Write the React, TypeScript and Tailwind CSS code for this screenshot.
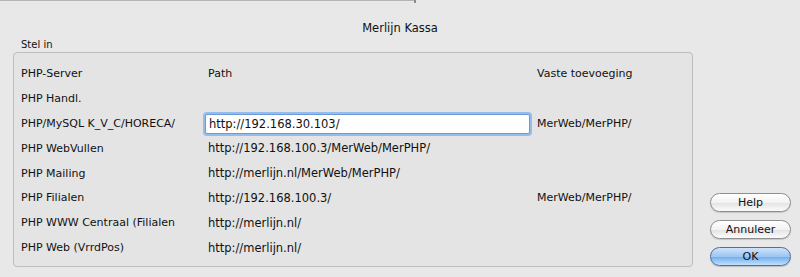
import React from "react";

const rows: { label: string; path?: string; input?: boolean; extra?: string }[] = [
  { label: "PHP-Server", path: "Path", extra: "Vaste toevoeging" },
  { label: "PHP Handl." },
  { label: "PHP/MySQL K_V_C/HORECA/", path: "http://192.168.30.103/", input: true, extra: "MerWeb/MerPHP/" },
  { label: "PHP WebVullen", path: "http://192.168.100.3/MerWeb/MerPHP/" },
  { label: "PHP Mailing", path: "http://merlijn.nl/MerWeb/MerPHP/" },
  { label: "PHP Filialen", path: "http://192.168.100.3/", extra: "MerWeb/MerPHP/" },
  { label: "PHP WWW Centraal (Filialen", path: "http://merlijn.nl/" },
  { label: "PHP Web (VrrdPos)", path: "http://merlijn.nl/" },
];

export default function App() {
  return (
    <div
      className="relative w-[800px] h-[277px] overflow-hidden bg-[#e8e8e8] text-[#111111]"
      style={{ fontFamily: '"DejaVu Sans", "Liberation Sans", sans-serif' }}
    >
      <div className="absolute left-0 top-0 w-[415px] h-px bg-[#b4b4b4]" />
      <div className="absolute left-[414px] top-0 w-[2px] h-[3px] bg-[#8c8c8c]" />

      <div className="h-[36px] flex items-end justify-center text-[11.5px] leading-[14px] pb-[1px]">Merlijn Kassa</div>
      <div className="pl-[21px] text-[10px] leading-[12px] mt-[3px] h-[12px]">Stel in</div>

      <div className="flex mt-[1px]">
        <div className="ml-[13px] w-[680px] h-[215px] rounded-[4px] border border-[#bdbdbd] bg-[#e4e4e4] pt-[9px]">
          {rows.map((r, i) => (
            <div key={i} className="flex items-center h-[24.86px] text-[11px]">
              <div className="w-[194px] pl-[7px] whitespace-nowrap">{r.label}</div>
              <div className="w-[322px] whitespace-nowrap">
                {r.input ? (
                  <div className="ml-[-3px] w-[325px] h-[20px] rounded-[2px] bg-white border border-[#6d9bd8] shadow-[0_0_0_2px_#94bdee] flex items-center pl-[3px] text-[11.5px]">
                    {r.path}
                  </div>
                ) : r.path ? (
                  <span className={i === 0 ? "text-[11px]" : "text-[11.5px]"}>{r.path}</span>
                ) : null}
              </div>
              <div className="whitespace-nowrap pl-[7px]">{r.extra}</div>
            </div>
          ))}
        </div>

        <div className="ml-[17px] mt-[141px] flex flex-col gap-[8px] w-[81px]">
          <button className="h-[19px] rounded-full border border-[#8e8e8e] bg-[linear-gradient(#ffffff,#f2f2f2_50%,#e2e2e2_51%,#fbfbfb)] text-[11px] leading-[17px] text-center shadow-[0_1px_1px_rgba(0,0,0,0.15)]">
            Help
          </button>
          <button className="h-[19px] rounded-full border border-[#8e8e8e] bg-[linear-gradient(#ffffff,#f2f2f2_50%,#e2e2e2_51%,#fbfbfb)] text-[11px] leading-[17px] text-center shadow-[0_1px_1px_rgba(0,0,0,0.15)]">
            Annuleer
          </button>
          <button className="h-[19px] rounded-full border border-[#4f6f9e] bg-[linear-gradient(#cfe3fb,#9cc6f3_50%,#6fabeb_51%,#bfe0fd)] text-[11px] leading-[17px] text-center shadow-[0_1px_1px_rgba(0,0,0,0.2)]">
            OK
          </button>
        </div>
      </div>
    </div>
  );
}
